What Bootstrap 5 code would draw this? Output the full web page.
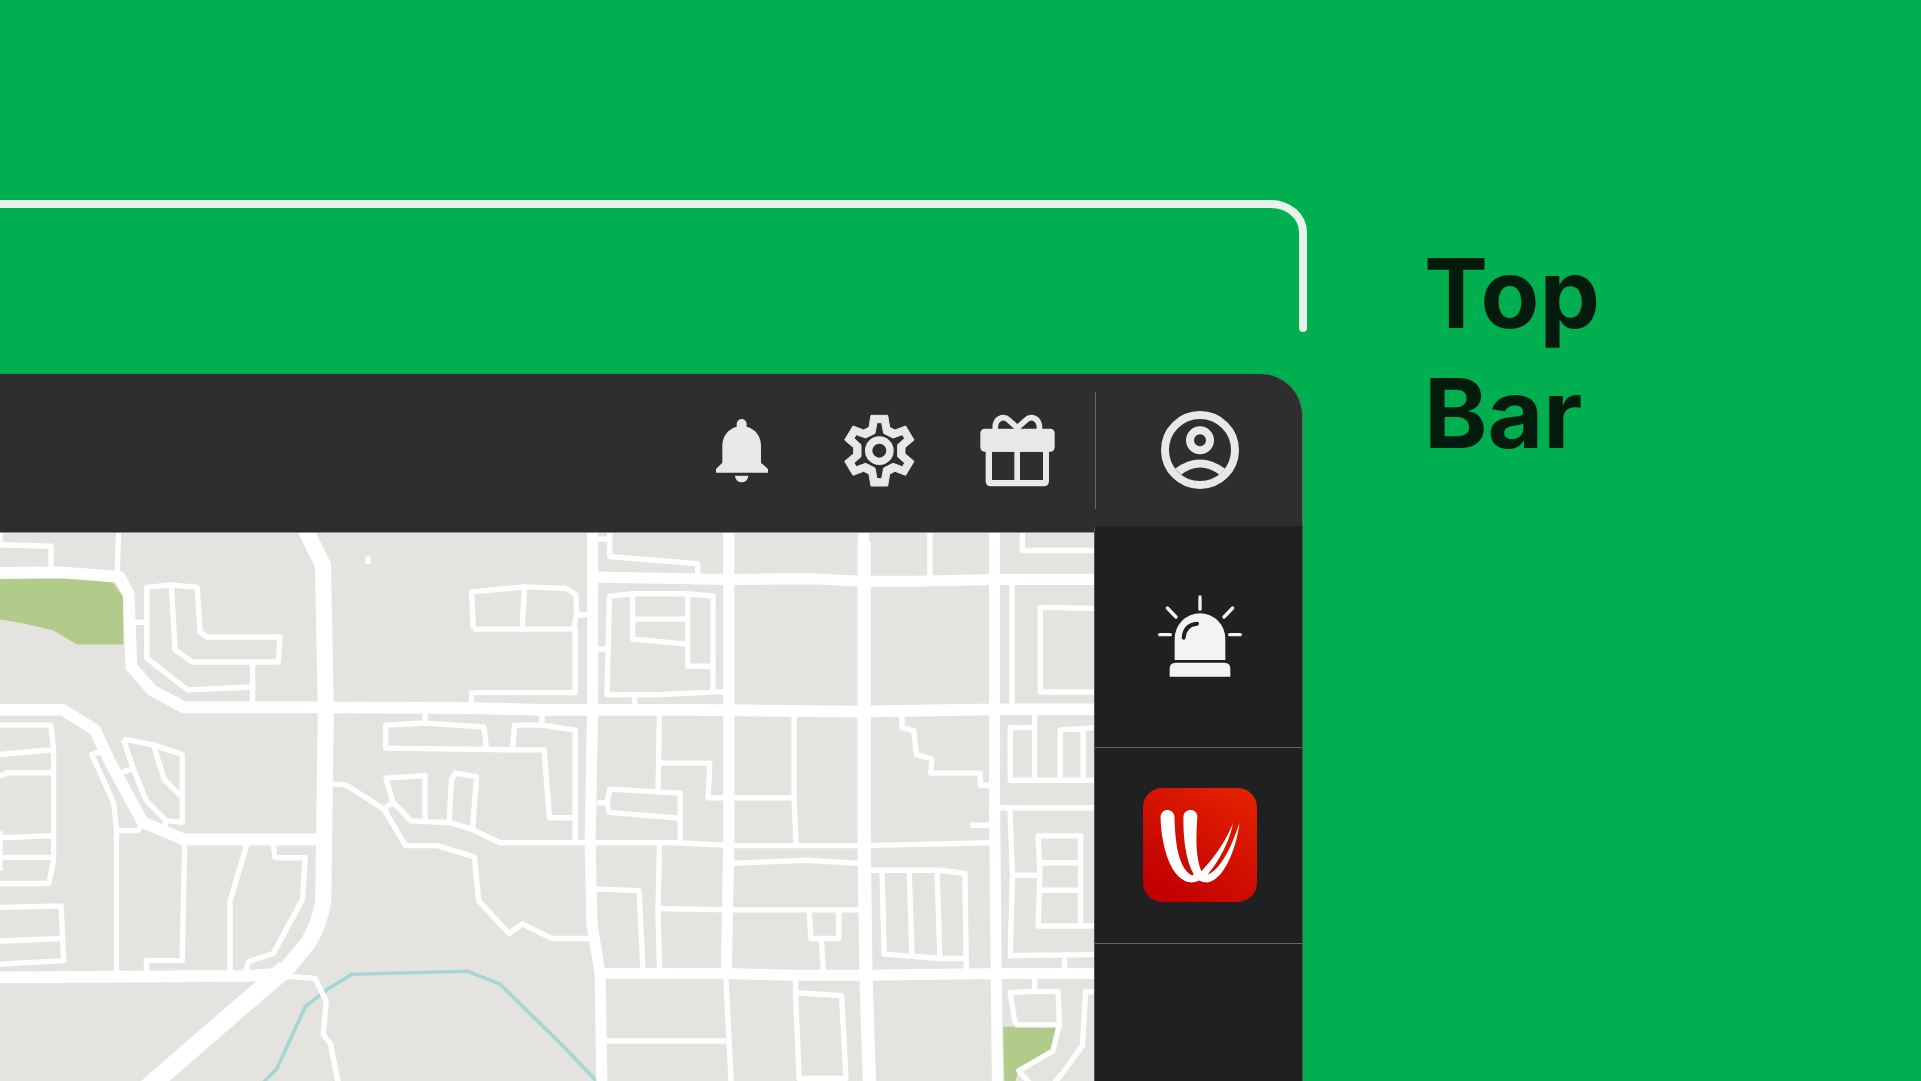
<!DOCTYPE html>
<html lang="en">
<head>
<meta charset="utf-8">
<meta name="viewport" content="width=device-width, initial-scale=1">
<title>Top Bar</title>
<link href="https://cdn.jsdelivr.net/npm/bootstrap@5.3.0/dist/css/bootstrap.min.css" rel="stylesheet">
<style>
  body { background: #00b050; }
  .device-col { width: 67.83%; padding-top: 200px; }
  .bracket {
    height: 128px; margin-right: -4px; margin-bottom: 46px;
    border: solid #e8f1ec; border-width: 8px 8px 0 0;
    border-top-right-radius: 36px 32px;
  }
  .bracket::after {
    content: ""; position: absolute; right: -8px; bottom: -4px;
    width: 8px; height: 8px; border-radius: 50%; background: #e8f1ec;
  }
  .topbar {
    height: 158px; padding-bottom: 6px;
    background: #2e2e30; border-right: 1px solid #646466;
    border-top-right-radius: 42px;
  }
  .tools { gap: 62px; padding-right: 39px; }
  .tool { color: #e8e8e8; line-height: 0; }
  .tool svg { width: 76px; height: 76px; }
  .account { width: 207px; padding-left: 2px; }
  .account svg { width: 80px; height: 80px; }
  .bar-rule { width: 1px; height: 117px; background: #68686a; margin-right: -1px; }
  .workspace { min-height: 0; }
  .map-pane { background: #e4e3df; border-top: 1px solid #8f8f8d; }
  .side {
    width: 209px; margin-top: -6px; background: #1e2022;
    border: solid #4c4e50; border-width: 0 1px;
  }
  .side-item { border-bottom: 1px solid #646668; padding: 0 0 2px 2px; line-height: 0; }
  .side-alert { height: 222px; }
  .side-app { height: 196px; }
  .side-alert svg { width: 84px; height: 82px; }
  .side-app svg { width: 114px; height: 114px; }
  .caption { padding: 233px 0 0 121px; }
  .caption h1 {
    font-family: Inter, "Open Sans", sans-serif; font-weight: 700;
    font-size: 96px; line-height: 120px; color: #021b0d;
  }
</style>
</head>
<body>
<div class="d-flex vh-100 overflow-hidden">
  <main class="device-col d-flex flex-column flex-shrink-0">
    <div class="bracket position-relative flex-shrink-0"></div>
    <header class="topbar d-flex align-items-center justify-content-end flex-shrink-0">
      <div class="tools d-flex align-items-center">
        <button type="button" class="tool btn p-0 border-0" aria-label="Notifications">
          <svg viewBox="42 157 228 228" fill="currentColor"><path d="M140 201V193a15 15 0 0 1 30 0V201C197 208 213 230 213 258V309L234 328V339H78V328L97 309V258C97 230 114 208 140 201ZM135 348H175A20 20 0 0 1 135 348Z"/></svg>
        </button>
        <button type="button" class="tool btn p-0 border-0" aria-label="Settings">
          <svg viewBox="456 157 228 228" fill="currentColor">
            <g transform="translate(568 273)">
              <path fill-rule="evenodd" stroke="currentColor" stroke-width="3" stroke-linejoin="round" d="M-31 -70L-25 -106H25L31 -70L47 -62L79 -74L104 -32L77 -9V9L104 32L79 74L47 62L31 70L25 106H-25L-31 70L-47 62L-79 74L-104 32L-77 9V-9L-104 -32L-79 -74L-47 -62ZM-13 -52L-41 -38L-69 -48L-76 -37L-55 -18V18L-76 37L-69 48L-41 38L-13 52L-7 84H7L13 52L41 38L69 48L76 37L55 18V-18L76 -37L69 -48L41 -38L13 -52L7 -84H-7Z"/>
              <circle r="32" fill="none" stroke="currentColor" stroke-width="22"/>
            </g>
          </svg>
        </button>
        <button type="button" class="tool btn p-0 border-0" aria-label="Rewards">
          <svg viewBox="870 157 228 228" fill="currentColor">
            <path d="M916 212C912 172 942 168 957 182L984 206M1048 212C1052 172 1022 168 1007 182L980 206" fill="none" stroke="currentColor" stroke-width="17"/>
            <rect x="871" y="207" width="223" height="69" rx="13"/>
            <path fill-rule="evenodd" d="M887 268H1077V364Q1077 380 1061 380H903Q887 380 887 364ZM906 276V361H973V276ZM990 276V361H1059V276Z"/>
          </svg>
        </button>
      </div>
      <div class="bar-rule"></div>
      <div class="account d-flex justify-content-center">
        <button type="button" class="tool btn p-0 border-0" aria-label="Account">
          <svg viewBox="237 152 240 240" fill="currentColor">
            <circle cx="357" cy="272" r="105" fill="none" stroke="currentColor" stroke-width="24"/>
            <circle cx="357" cy="243" r="30" fill="none" stroke="currentColor" stroke-width="24"/>
            <path d="M282 328Q357 273 432 328L415 346Q357 303 301 346Z"/>
          </svg>
        </button>
      </div>
    </header>
    <div class="workspace d-flex flex-grow-1">
      <div class="map-pane flex-grow-1 overflow-hidden">
        <svg class="d-block w-100 h-100" viewBox="0 35 3063 1534" preserveAspectRatio="xMinYMin slice" role="img" aria-label="Street map" fill="none" stroke="#fff" stroke-width="15" stroke-linejoin="round">
          <path fill="#b0cb8a" stroke="none" d="M0 160L170 158L315 172L345 215V347H215L150 308L60 287L0 277ZM2808 1417H2958L2944 1485L2852 1535L2840 1580H2812Z"/>
          <path stroke="#a4d6d6" stroke-width="10" d="M735 1575L775 1535L855 1360L920 1310L985 1270L1310 1262L1400 1298L1570 1465L1680 1580"/>
          <!-- main roads -->
          <path stroke-width="45" d="M850 15L904 125L912 525L905 1065Q895 1130 862 1183L790 1270"/>
          <path stroke-width="52" d="M800 1255L745 1300L410 1590"/>
          <path stroke-width="33" d="M0 147L170 145L335 158L360 205L368 410L425 475L515 523H905L1320 525L1520 530H1950L2392 535L2782 529H3080M0 530H175L265 585L310 680L400 845L515 893H905M0 1279L690 1275L790 1268"/>
          <!-- local streets, west side -->
          <path d="M0 30V60M0 68L143 72V140M332 30L328 150M375 285H410M707 466L525 474L411 385V187L480 180L552 187L560 312L580 326H784L779 396H538L490 362L480 185M707 396V515
          M0 573H142L150 640V950L137 1016H0M0 655L150 641M0 716L20 706H150M0 888L150 882M0 943H150M0 870V980M0 1083L171 1079L178 1232L0 1242M0 1177L178 1170
          M285 647L257 655L318 790L326 865V1270M326 868H385L400 850M345 612L430 628L510 655V845L465 840L410 785L375 700L345 612M340 705L370 695M430 630L460 725L505 770M462 840V880
          M517 900L510 1232H410V1270M693 900L644 1065V1265M765 905L770 944H854L847 1060L765 1212L695 1235L688 1265
          M930 737L970 741L1075 808L1135 910H1225L1328 942L1340 1065L1425 1156L1462 1129L1545 1170H1650M1075 808L1100 788M1190 837V714L1080 721L1100 788L1150 841L1260 846L1320 864L1400 902H1890L2052 910H2412L2782 902
          M1257 845L1264 725L1275 707L1334 717L1323 860M1190 540V565M1440 642L1080 637V573L1190 567L1355 578L1362 640M1440 642H1523L1538 832H1608M1435 640L1440 573H1517L1610 587V900M1517 540V573
          M1320 515V482H1610V300M1325 304L1320 200L1467 186L1585 190L1612 208L1614 262L1606 304H1325M1468 190L1462 300M1614 264H1650M1030 101V122M800 1275L882 1282L913 1345L905 1440L925 1465L948 1580"/>
          <g transform="translate(1512 0)">
            <path stroke-width="31" d="M147 30V510L140 900L145 1130L168 1270L173 1580M528 20V900L521 1270M905 20V150M1272 20V800L1280 1580M147 158L530 165L760 163L900 170H1050L1272 165H1560M168 1268H520L700 1273H900L1280 1268H1560"/>
            <path stroke-width="37" d="M907 60V900L912 1270L922 1580"/>
            <!-- local streets, east side -->
            <path d="M520 1280L535 1580M160 52H195M195 30V101L441 121V155M1091 30V160M1350 30V84H1560M515 479L340 487L187 488L194 212L260 205H410L484 212V480M265 490V515M160 360H190M259 208V332L412 346M259 276H412M413 208V408H484M1321 175V515M1560 246L1400 243V480H1560
            M334 540L330 755M334 679H475L470 776H710M160 790H187M392 895V763L195 752L187 790L193 817L390 833M711 540V776L716 905M1013 548V580L1046 588L1053 655L1097 668L1093 707H1232V741H1262M1204 853H1262
            M1384 545V725M1384 580H1316V727H1560M1560 580L1456 586V725M1520 580V725M1285 804H1560M1315 804L1322 990L1316 1218L1560 1215M1322 993H1397M1560 1135H1394L1399 990L1394 883H1513V1135M1397 958H1513M1399 1035H1513M1468 1215V1260M1384 1275V1318
            M334 905L330 1090L334 1260M150 1031L277 1036L288 1260M332 1086L540 1090H900M535 960L740 951L895 960M753 1095L758 1170H836V1095M787 1170L793 1265M925 979H1120L1189 988L1193 1260M957 980L963 1214L1120 1226H1193M1033 980L1041 1220M1111 980L1119 1225
            M715 1280V1325L725 1562H856L844 1330L718 1322M185 1457H520M1560 1320L1527 1318L1518 1470L1460 1550L1435 1580M1330 1410L1316 1322L1384 1318H1450L1454 1412H1330M1454 1410L1435 1485L1340 1540L1375 1580"/>
          </g>
        </svg>
      </div>
      <nav class="side flex-shrink-0" aria-label="Apps">
        <a href="#" class="side-item side-alert d-flex align-items-center justify-content-center" aria-label="Alerts">
          <svg viewBox="235 76 252 246" fill="#f4f3f2">
            <path d="M285 271V207A76 76 0 0 1 437 207V271ZM270 321V297Q270 279 288 279H434Q452 279 452 297V321Z"/>
            <g fill="none" stroke-linecap="round"><path stroke="#f4f3f2" stroke-width="10" d="M361 82V119M263 115L289 142M459 115L433 142M240 195H272M450 195H482"/><path stroke="#1e2022" stroke-width="12" d="M312 204Q315 165 352 162"/></g>
          </svg>
        </a>
        <a href="#" class="side-item side-app d-flex align-items-center justify-content-center" aria-label="W app">
          <svg viewBox="190 113 344 344">
            <defs><linearGradient id="appRed" x1="0.25" y1="1" x2="0.9" y2="0"><stop offset="0" stop-color="#c10000"/><stop offset="1" stop-color="#e42200"/></linearGradient></defs>
            <rect x="190" y="113" width="344" height="344" rx="58" fill="url(#appRed)"/>
            <path fill="#fff" d="M243 202C242 172 284 172 285 200C287 290 300 352 333 374Q339 378 343 374C318 330 311 260 312 200C313 173 354 173 354 200C350 260 348 320 366 364C400 330 440 275 462 218C450 280 415 340 385 374C420 362 455 300 481 218C472 300 430 397 382 398Q370 398 360 392Q348 398 336 398C275 395 245 290 243 202Z"/>
          </svg>
        </a>
      </nav>
    </div>
  </main>
  <section class="caption">
    <h1 class="mb-0">Top<br>Bar</h1>
  </section>
</div>
<script src="https://cdn.jsdelivr.net/npm/bootstrap@5.3.0/dist/js/bootstrap.bundle.min.js"></script>
</body>
</html>
